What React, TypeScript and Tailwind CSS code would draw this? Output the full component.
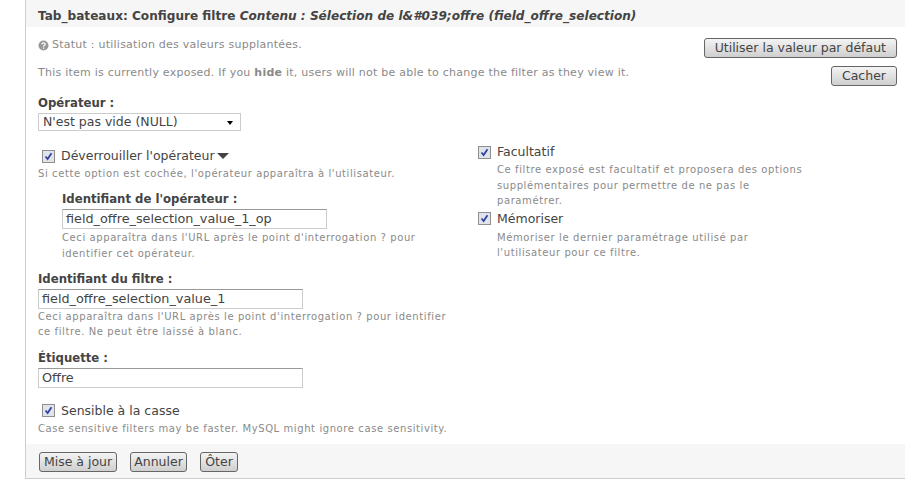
import React from "react";

const font = { fontFamily: '"DejaVu Sans", Verdana, sans-serif' };

function Check() {
  return (
    <span className="flex h-[13px] w-[13px] shrink-0 items-center justify-center border border-[#8f8f8f] bg-[#dfe3ea]">
      <svg width="9" height="9" viewBox="0 0 9 9">
        <path d="M1.5 4.5 L3.6 7 L7.5 1.2" fill="none" stroke="#2f3f9e" strokeWidth="1.7" />
      </svg>
    </span>
  );
}

function Btn({ children, className = "" }: { children: React.ReactNode; className?: string }) {
  return (
    <button
      className={`h-5 rounded-[3px] border border-[#666] bg-gradient-to-b from-[#f4f4f4] to-[#cfcfcf] text-[12.5px] leading-[18px] text-[#444] ${className}`}
    >
      {children}
    </button>
  );
}

function Help({ children, className = "" }: { children: React.ReactNode; className?: string }) {
  return <p className={`text-[10px] leading-[15.5px] tracking-[0.59px] text-[#8a8a8a] ${className}`}>{children}</p>;
}

function Field({ label, value }: { label: string; value: string }) {
  return (
    <div>
      <div className="text-[11.7px] font-bold leading-[16px] text-[#444]">{label}</div>
      <div className="mt-[2px] flex h-5 w-[265px] items-center border border-[#ccc] border-t-[#999] bg-white px-[3px] pt-[1px] text-[12.8px] text-[#444]">
        {value}
      </div>
    </div>
  );
}

export default function App() {
  return (
    <div className="h-[491px] w-[905px] overflow-hidden bg-white pl-[25px]" style={font}>
      <div className="h-[479px] border-b border-l border-[#ccc] bg-white">
        <div className="flex h-[27px] items-center bg-[#f6f6f6] pl-[12px] pt-[6px] text-[12.1px] font-bold text-[#444]">
          <span>
            Tab_bateaux: Configure filtre <em>Contenu : Sélection de l&amp;#039;offre (field_offre_selection)</em>
          </span>
        </div>
        <div className="flex h-[417px] flex-col pl-[12px]">
          <div className="relative">
            <div className="flex items-center gap-[3px] pt-[11px] text-[11px] leading-[14px] tracking-[0.24px] text-[#8a8a8a]">
              <svg width="11" height="11" viewBox="0 0 11 11">
                <circle cx="5.5" cy="5.5" r="5" fill="#999" />
                <path d="M3.8 4.2 C3.8 2.4 7.2 2.4 7.2 4.2 C7.2 5.3 5.5 5.3 5.5 6.5" fill="none" stroke="#fff" strokeWidth="1.2" />
                <rect x="4.9" y="7.4" width="1.2" height="1.3" fill="#fff" />
              </svg>
              <span>Statut : utilisation des valeurs supplantées.</span>
            </div>
            <p className="pt-[14px] text-[11px] leading-[14px] tracking-[0.24px] text-[#8a8a8a]">
              This item is currently exposed. If you <b>hide</b> it, users will not be able to change the filter as they view it.
            </p>
            <div className="absolute right-[8px] top-[11px] flex flex-col items-end gap-[8px]">
              <Btn className="px-[10px]">Utiliser la valeur par défaut</Btn>
              <Btn className="px-[10px]">Cacher</Btn>
            </div>
          </div>
          <div className="flex">
            <div className="w-[440px]">
              <div className="pt-[15px] text-[11.7px] font-bold leading-[16px] text-[#444]">Opérateur :</div>
              <div className="mt-[2px] flex h-[18px] w-[203px] items-center justify-between border border-[#ccc] pl-[4px] pr-[7px] pt-[1px] text-[12.5px] text-[#444]">
                <span>N'est pas vide (NULL)</span>
                <span className="h-0 w-0 border-x-[3.5px] border-t-[4px] border-x-transparent border-t-black" />
              </div>
              <div className="ml-[4px] mt-[17px] flex items-center gap-[6px] text-[12.5px] leading-[16px] text-[#444]">
                <Check />
                <span>Déverrouiller l'opérateur</span>
                <span className="-ml-[4px] h-0 w-0 border-x-[6px] border-t-[6px] border-x-transparent border-t-[#444]" />
              </div>
              <Help className="mt-[2px]">Si cette option est cochée, l'opérateur apparaîtra à l'utilisateur.</Help>
              <div className="ml-[24px] mt-[9px]">
                <Field label="Identifiant de l'opérateur :" value="field_offre_selection_value_1_op" />
                <Help className="mt-[1px] w-[380px] leading-[16px]">Ceci apparaîtra dans l'URL après le point d'interrogation ? pour identifier cet opérateur.</Help>
              </div>
              <div className="mt-[9px]">
                <Field label="Identifiant du filtre :" value="field_offre_selection_value_1" />
                <Help className="mt-[0px] w-[415px]">Ceci apparaîtra dans l'URL après le point d'interrogation ? pour identifier ce filtre. Ne peut être laissé à blanc.</Help>
              </div>
              <div className="mt-[10px]">
                <Field label="Étiquette :" value="Offre" />
              </div>
              <div className="ml-[4px] mt-[15px] flex items-center gap-[6px] text-[12.5px] leading-[16px] text-[#444]">
                <Check />
                <span>Sensible à la casse</span>
              </div>
              <Help className="mt-[2px]">Case sensitive filters may be faster. MySQL might ignore case sensitivity.</Help>
            </div>
            <div className="pt-[64px]">
              <div className="flex items-center gap-[6px] text-[12.5px] leading-[16px] text-[#444]">
                <Check />
                <span>Facultatif</span>
              </div>
              <Help className="ml-[19px] mt-[2px] w-[315px]">Ce filtre exposé est facultatif et proposera des options supplémentaires pour permettre de ne pas le paramétrer.</Help>
              <div className="mt-[2px] flex items-center gap-[6px] text-[12.5px] leading-[16px] text-[#444]">
                <Check />
                <span>Mémoriser</span>
              </div>
              <Help className="ml-[19px] mt-[3px] w-[290px]">Mémoriser le dernier paramétrage utilisé par l'utilisateur pour ce filtre.</Help>
            </div>
          </div>
        </div>
        <div className="flex h-[34px] items-center gap-[13px] bg-[#f6f6f6] pl-[13px] pt-[1px]">
          <Btn className="w-[78px]">Mise à jour</Btn>
          <Btn className="w-[57px]">Annuler</Btn>
          <Btn className="w-[38px]">Ôter</Btn>
        </div>
      </div>
    </div>
  );
}
